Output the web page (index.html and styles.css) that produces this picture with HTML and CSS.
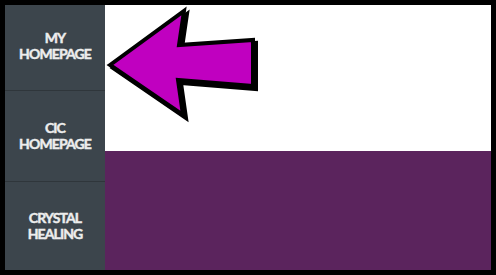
FILE: index.html
```html
<!DOCTYPE html>
<html>
<head>
<meta charset="utf-8">
<link rel="stylesheet" href="styles.css">
</head>
<body>
<div class="frame">
  <nav class="sidebar">
    <a class="nav-item first">MY<br>HOMEPAGE</a>
    <a class="nav-item second">CIC<br>HOMEPAGE</a>
    <a class="nav-item third">CRYSTAL<br>HEALING</a>
  </nav>
  <main class="content">
    <section class="hero"></section>
    <section class="band"></section>
  </main>
  <svg class="arrow" width="160" height="125" viewBox="100 0 160 125">
    <polygon class="arrow-shadow" points="110,65 184,11 179,45 253,40 253,86 178,80 183,115" transform="translate(3,3)"/>
    <polygon class="arrow-body" points="110,65 184,11 179,45 253,40 253,86 178,80 183,115"/>
  </svg>
</div>
</body>
</html>
```
FILE: styles.css
```css
html, body {
  margin: 0;
  padding: 0;
  background: #000;
}
.frame {
  position: relative;
  width: 496px;
  height: 275px;
  box-sizing: border-box;
  padding: 5px;
  display: flex;
}
.sidebar {
  width: 100px;
  background: #3c454c;
  display: flex;
  flex-direction: column;
}
.nav-item {
  display: flex;
  align-items: center;
  justify-content: center;
  text-align: center;
  color: #ededed;
  font-family: Lato, "Liberation Sans", sans-serif;
  font-weight: 700;
  font-size: 14px;
  line-height: 16px;
  letter-spacing: -0.9px;
  -webkit-text-stroke: 0.45px #ededed;
  box-sizing: border-box;
}
.first { height: 86px; border-bottom: 1px solid #2f363b; padding-bottom: 3px; }
.second { height: 91px; border-bottom: 1px solid #2f363b; }
.third { flex: 1; }
.content {
  flex: 1;
  display: flex;
  flex-direction: column;
}
.hero {
  height: 146px;
  background: #fff;
}
.band {
  flex: 1;
  background: #5b245d;
}
.arrow {
  position: absolute;
  left: 100px;
  top: 0;
}
.arrow-shadow {
  fill: #000;
  stroke: #000;
  stroke-width: 4;
  stroke-linejoin: miter;
}
.arrow-body {
  fill: #c000c0;
  stroke: #000;
  stroke-width: 4;
  stroke-linejoin: miter;
}
```
